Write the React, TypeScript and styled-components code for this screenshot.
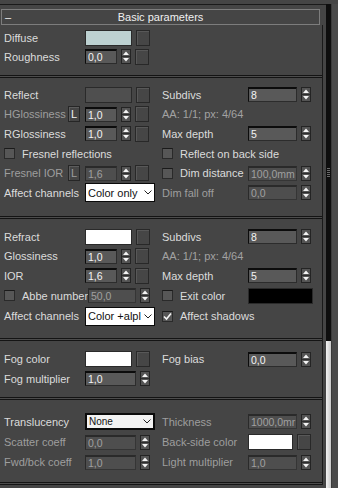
import React from "react";
import styled, { createGlobalStyle } from "styled-components";

const GlobalStyle = createGlobalStyle`
  html, body {
    margin: 0;
    padding: 0;
    background: #454545;
  }
  body {
    font-family: "Liberation Sans", Arial, sans-serif;
    font-size: 11px;
    color: #dcdcdc;
  }
`;

const Frame = styled.div`
  display: flex;
  width: 338px;
  height: 488px;
  padding-top: 4px;
  box-sizing: border-box;
  overflow: hidden;
  background: #454545;
`;

const Main = styled.div`
  width: 326px;
  flex: none;
  border-top: 1px solid #1a1a1a;
  padding-top: 4px;
`;

const Track = styled.div`
  width: 5px;
  flex: none;
  display: flex;
  flex-direction: column;
  background: #0e0e0e;
`;

const TrackUpper = styled.div`
  flex: 1;
  display: flex;
  align-items: center;
  justify-content: center;
`;

const Grip = styled.div`
  width: 3px;
  height: 9px;
  background: repeating-linear-gradient(
    180deg,
    #6a6a6a 0,
    #6a6a6a 1px,
    transparent 1px,
    transparent 2px
  );
`;

const Thumb = styled.div`
  height: 147px;
  background: linear-gradient(90deg, #f2f2f2, #c9c9c9);
`;

const Gutter = styled.div`
  flex: 1;
  background: #4a4a4a;
  border-left: 1px solid #3a3a3a;
`;

const Rollout = styled.div`
  width: 323px;
`;

const Header = styled.div`
  display: grid;
  grid-template-columns: 20px 1fr 20px;
  align-items: center;
  height: 14px;
  margin: 0 3px 0 1px;
  border: 1px solid #7d7d7d;
  color: #f0f0f0;
  line-height: 14px;
`;

const Collapse = styled.span`
  padding-left: 3px;
`;

const Title = styled.span`
  text-align: center;
`;

const Body = styled.div`
  border-right: 1px solid #1a1a1a;
`;

const Section = styled.div<{ $rows: string; $pt: number; $pb: number }>`
  display: grid;
  grid-template-columns: 158px 1fr;
  grid-template-rows: ${(p) => p.$rows};
  padding: ${(p) => p.$pt}px 0 ${(p) => p.$pb}px;
`;

const Divider = styled.div`
  height: 1px;
  border-top: 1px solid #141414;
  border-bottom: 1px solid #141414;
  background: #4c4c4c;
`;

const Cell = styled.div`
  display: flex;
  align-items: center;
  padding-left: 4px;
  min-width: 0;
  white-space: nowrap;
`;

const Label = styled.span<{ $w?: number; $dim?: boolean }>`
  flex: none;
  width: ${(p) => (p.$w ? `${p.$w}px` : "auto")};
  color: ${(p) => (p.$dim ? "#9e9e9e" : "#dcdcdc")};
`;

const LBtn = styled.span<{ $dim?: boolean }>`
  flex: none;
  width: 12px;
  height: 16px;
  box-sizing: border-box;
  margin-right: 5px;
  border: 1px solid #262626;
  box-shadow: inset 1px 1px 0 #5c5c5c;
  display: flex;
  align-items: center;
  justify-content: center;
  color: ${(p) => (p.$dim ? "#9e9e9e" : "#f0f0f0")};
`;

const Controls = styled.div`
  display: flex;
  align-items: center;
  gap: 4px;
`;

const NumBox = styled.div<{ $w: number; $dim?: boolean }>`
  width: ${(p) => p.$w}px;
  height: 15px;
  box-sizing: border-box;
  padding-left: 2px;
  display: flex;
  align-items: center;
  overflow: hidden;
  font-size: 10.5px;
  background: ${(p) => (p.$dim ? "#4e4e4e" : "#595959")};
  border: 1px solid ${(p) => (p.$dim ? "#353535" : "#2c2c2c")};
  border-top: 2px solid ${(p) => (p.$dim ? "#2a2a2a" : "#0c0c0c")};
  border-left-color: ${(p) => (p.$dim ? "#2a2a2a" : "#0c0c0c")};
  color: ${(p) => (p.$dim ? "#a0a0a0" : "#f4f4f4")};
`;

const Spinner = styled.span`
  width: 10px;
  height: 15px;
  box-sizing: border-box;
  border: 1px solid #242424;
  background: #545454;
  display: flex;
  flex: none;
`;

const MapBtn = styled.span`
  width: 14px;
  height: 16px;
  flex: none;
  box-sizing: border-box;
  border: 1px solid #282828;
  background: #464646;
  box-shadow: inset 1px 1px 0 #585858;
`;

const Swatch = styled.span<{ $w: number; $color: string }>`
  width: ${(p) => p.$w}px;
  height: 16px;
  flex: none;
  box-sizing: border-box;
  border: 1px solid #2a2a2a;
  background: ${(p) => p.$color};
`;

const Select = styled.div<{ $bold?: boolean }>`
  width: 70px;
  height: ${(p) => (p.$bold ? 17 : 19)}px;
  box-sizing: border-box;
  display: flex;
  align-items: center;
  padding-left: 2px;
  background: ${(p) => (p.$bold ? "#f2f2f2" : "#ffffff")};
  border: ${(p) => (p.$bold ? 2 : 1)}px solid #0a0a0a;
  color: #111;
  font-size: ${(p) => (p.$bold ? 10 : 11)}px;
`;

const SelectText = styled.span`
  flex: 1;
  overflow: hidden;
`;

const Chevron = styled.svg`
  flex: none;
  margin: 0 2px 0 1px;
`;

const Check = styled.span`
  width: 11px;
  height: 11px;
  flex: none;
  box-sizing: border-box;
  margin-right: 7px;
  border: 1px solid #2a2a2a;
  border-top-color: #1a1a1a;
  background: #575757;
  display: flex;
  align-items: center;
  justify-content: center;
`;

const Dim = styled.span`
  color: #a2a2a2;
`;

const Arrows = () => (
  <Spinner>
    <svg width="8" height="13" viewBox="0 0 8 13">
      <path d="M4 1.5 L7 5 H1 Z" fill="#f4f4f4" />
      <rect x="0" y="6" width="8" height="1" fill="#2e2e2e" />
      <path d="M1 8 H7 L4 11.5 Z" fill="#f4f4f4" />
    </svg>
  </Spinner>
);

const Spin = ({
  value,
  w = 32,
  dim,
  map,
}: {
  value: string;
  w?: number;
  dim?: boolean;
  map?: boolean;
}) => (
  <Controls>
    <NumBox $w={w} $dim={dim}>
      {value}
    </NumBox>
    <Arrows />
    {map && <MapBtn />}
  </Controls>
);

const ColorMap = ({ color, w = 47, map = true }: { color: string; w?: number; map?: boolean }) => (
  <Controls>
    <Swatch $w={w} $color={color} />
    {map && <MapBtn />}
  </Controls>
);

const Dropdown = ({ text, bold }: { text: string; bold?: boolean }) => (
  <Select $bold={bold}>
    <SelectText>{text}</SelectText>
    <Chevron width="8" height="5" viewBox="0 0 8 5">
      <path d="M0.5 0.5 L4 4 L7.5 0.5" fill="none" stroke="#222" strokeWidth="1" />
    </Chevron>
  </Select>
);

const Box = ({ on }: { on?: boolean }) => (
  <Check>
    {on && (
      <svg width="9" height="9" viewBox="0 0 9 9">
        <path d="M1 4.5 L3.5 7 L8 1.5" fill="none" stroke="#f4f4f4" strokeWidth="1.6" />
      </svg>
    )}
  </Check>
);

const Empty = () => <Cell />;

export default function App() {
  return (
    <>
      <GlobalStyle />
      <Frame>
        <Main>
          <Rollout>
            <Header>
              <Collapse>–</Collapse>
              <Title>Basic parameters</Title>
              <span />
            </Header>
            <Body>
              <Section $rows="19px 19px" $pt={3} $pb={9}>
                <Cell>
                  <Label $w={81}>Diffuse</Label>
                  <ColorMap color="#bdd1d1" />
                </Cell>
                <Empty />
                <Cell>
                  <Label $w={81}>Roughness</Label>
                  <Spin value="0,0" map />
                </Cell>
                <Empty />
              </Section>
              <Divider />

              <Section $rows="repeat(6, 19.6px)" $pt={7} $pb={13.4}>
                <Cell>
                  <Label $w={81}>Reflect</Label>
                  <ColorMap color="#4f4f4f" />
                </Cell>
                <Cell>
                  <Label $w={86}>Subdivs</Label>
                  <Spin value="8" w={49} />
                </Cell>

                <Cell>
                  <Label $w={64} $dim>
                    HGlossiness
                  </Label>
                  <LBtn>L</LBtn>
                  <Spin value="1,0" map />
                </Cell>
                <Cell>
                  <Dim>AA: 1/1; px: 4/64</Dim>
                </Cell>

                <Cell>
                  <Label $w={81}>RGlossiness</Label>
                  <Spin value="1,0" map />
                </Cell>
                <Cell>
                  <Label $w={86}>Max depth</Label>
                  <Spin value="5" w={49} />
                </Cell>

                <Cell>
                  <Box />
                  <Label>Fresnel reflections</Label>
                </Cell>
                <Cell>
                  <Box />
                  <Label>Reflect on back side</Label>
                </Cell>

                <Cell>
                  <Label $w={64} $dim>
                    Fresnel IOR
                  </Label>
                  <LBtn $dim>L</LBtn>
                  <Spin value="1,6" dim map />
                </Cell>
                <Cell>
                  <Box />
                  <Label $w={68}>Dim distance</Label>
                  <Spin value="100,0mm" w={49} dim />
                </Cell>

                <Cell>
                  <Label $w={81}>Affect channels</Label>
                  <Dropdown text="Color only" />
                </Cell>
                <Cell>
                  <Label $w={86} $dim>
                    Dim fall off
                  </Label>
                  <Spin value="0,0" w={49} dim />
                </Cell>
              </Section>
              <Divider />

              <Section $rows="repeat(4, 19.6px) 22px" $pt={8} $pb={10.6}>
                <Cell>
                  <Label $w={81}>Refract</Label>
                  <ColorMap color="#ffffff" />
                </Cell>
                <Cell>
                  <Label $w={86}>Subdivs</Label>
                  <Spin value="8" w={49} />
                </Cell>

                <Cell>
                  <Label $w={81}>Glossiness</Label>
                  <Spin value="1,0" map />
                </Cell>
                <Cell>
                  <Dim>AA: 1/1; px: 4/64</Dim>
                </Cell>

                <Cell>
                  <Label $w={81}>IOR</Label>
                  <Spin value="1,6" map />
                </Cell>
                <Cell>
                  <Label $w={86}>Max depth</Label>
                  <Spin value="5" w={49} />
                </Cell>

                <Cell>
                  <Box />
                  <Label $w={66}>Abbe number</Label>
                  <Spin value="50,0" w={48} dim />
                </Cell>
                <Cell>
                  <Box />
                  <Label $w={68}>Exit color</Label>
                  <ColorMap color="#000000" w={65} map={false} />
                </Cell>

                <Cell>
                  <Label $w={81}>Affect channels</Label>
                  <Dropdown text="Color +alpl" />
                </Cell>
                <Cell>
                  <Box on />
                  <Label>Affect shadows</Label>
                </Cell>
              </Section>
              <Divider />

              <Section $rows="19.5px 19.5px" $pt={8.5} $pb={8.5}>
                <Cell>
                  <Label $w={81}>Fog color</Label>
                  <ColorMap color="#ffffff" />
                </Cell>
                <Cell>
                  <Label $w={86}>Fog bias</Label>
                  <Spin value="0,0" w={49} />
                </Cell>
                <Cell>
                  <Label $w={81}>Fog multiplier</Label>
                  <Spin value="1,0" w={51} />
                </Cell>
                <Empty />
              </Section>
              <Divider />

              <Section $rows="22px 19.6px 19.6px" $pt={10.7} $pb={10.1}>
                <Cell>
                  <Label $w={81}>Translucency</Label>
                  <Dropdown text="None" bold />
                </Cell>
                <Cell>
                  <Label $w={86} $dim>
                    Thickness
                  </Label>
                  <Spin value="1000,0mr" w={49} dim />
                </Cell>

                <Cell>
                  <Label $w={81} $dim>
                    Scatter coeff
                  </Label>
                  <Spin value="0,0" w={51} dim />
                </Cell>
                <Cell>
                  <Label $w={86} $dim>
                    Back-side color
                  </Label>
                  <ColorMap color="#ffffff" w={45} />
                </Cell>

                <Cell>
                  <Label $w={81} $dim>
                    Fwd/bck coeff
                  </Label>
                  <Spin value="1,0" w={51} dim />
                </Cell>
                <Cell>
                  <Label $w={86} $dim>
                    Light multiplier
                  </Label>
                  <Spin value="1,0" w={49} dim />
                </Cell>
              </Section>
              <Divider />
            </Body>
          </Rollout>
        </Main>
        <Track>
          <TrackUpper>
            <Grip />
          </TrackUpper>
          <Thumb />
        </Track>
        <Gutter />
      </Frame>
    </>
  );
}
